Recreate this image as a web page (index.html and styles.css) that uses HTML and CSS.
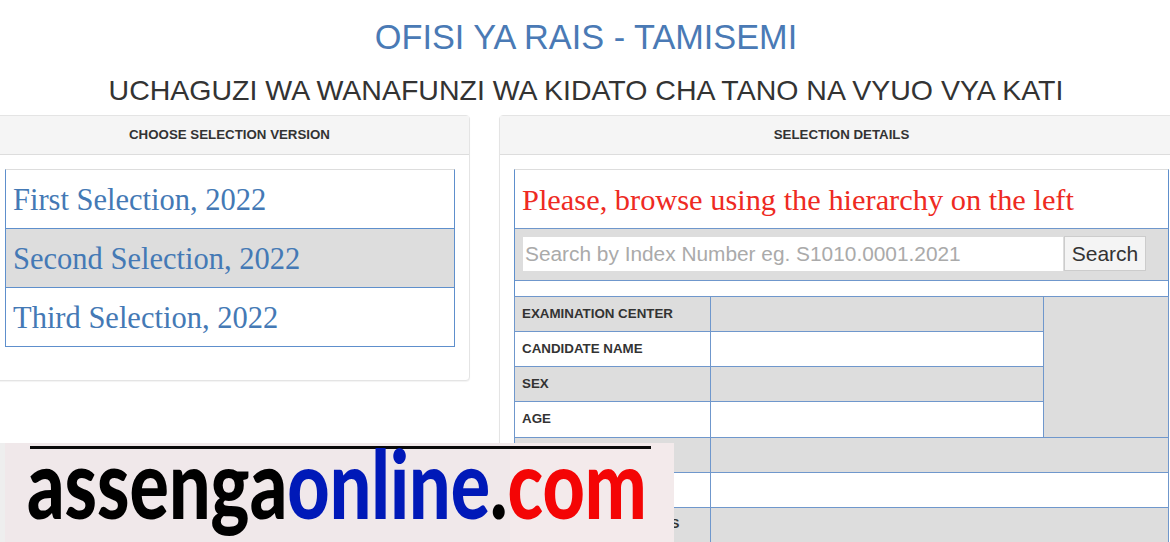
FILE: index.html
```html
<!DOCTYPE html>
<html lang="en">
<head>
<meta charset="utf-8">
<title>OFISI YA RAIS - TAMISEMI</title>
<link rel="stylesheet" href="styles.css">
</head>
<body>
<div class="page">
  <h1 class="title">OFISI YA RAIS - TAMISEMI</h1>
  <h2 class="subtitle">UCHAGUZI WA WANAFUNZI WA KIDATO CHA TANO NA VYUO VYA KATI</h2>
  <div class="columns">
    <section class="panel panel-left">
      <div class="panel-head">CHOOSE SELECTION VERSION</div>
      <div class="panel-body">
        <ul class="versions">
          <li class="version">First Selection, 2022</li>
          <li class="version alt">Second Selection, 2022</li>
          <li class="version">Third Selection, 2022</li>
        </ul>
      </div>
    </section>
    <section class="panel panel-right">
      <div class="panel-head">SELECTION DETAILS</div>
      <div class="panel-body">
        <div class="details">
          <div class="notice">Please, browse using the hierarchy on the left</div>
          <form class="search">
            <input class="search-input" type="text" placeholder="Search by Index Number eg. S1010.0001.2021">
            <button class="search-btn" type="button">Search</button>
          </form>
          <div class="spacer"></div>
          <table class="info">
            <tr class="alt"><th>EXAMINATION CENTER</th><td></td><td class="photo alt" rowspan="4"></td></tr>
            <tr><th>CANDIDATE NAME</th><td></td></tr>
            <tr class="alt"><th>SEX</th><td></td></tr>
            <tr><th>AGE</th><td></td></tr>
            <tr class="alt"><th>SELECTED SCHOOL</th><td colspan="2"></td></tr>
            <tr><th>DISTRICT</th><td colspan="2"></td></tr>
            <tr class="alt"><th>EXAMINATION RESULTS</th><td colspan="2"></td></tr>
          </table>
        </div>
      </div>
    </section>
  </div>
</div>
<div class="banner">
  <div class="banner-rule"></div>
  <div class="banner-text"><span class="ink">assenga</span><span class="blue">online</span><span class="ink">.</span><span class="red">com</span></div>
</div>
</body>
</html>
```
FILE: styles.css
```css
* { box-sizing: border-box; }
html, body { margin: 0; padding: 0; background: #fff; }
body { width: 1170px; height: 542px; overflow: hidden; position: relative; font-family: "Liberation Sans", Arial, sans-serif; color: #333; }
.page { width: 1170px; height: 542px; overflow: hidden; }
.title { margin: 0; height: 73px; padding: 17px 0 0 2px; font-size: 34.3px; line-height: 40px; font-weight: 400; color: #4a7ab5; text-align: center; }
.subtitle { margin: 0; height: 42px; padding-left: 2px; font-size: 28.5px; line-height: 34px; font-weight: 400; color: #333; text-align: center; white-space: nowrap; }
.columns { display: flex; gap: 29px; margin-left: -11px; align-items: flex-start; }
.panel { background: #fff; border: 1px solid #e4e4e4; border-radius: 4px; box-shadow: 0 1px 1px rgba(0,0,0,.05); flex: none; }
.panel-left { width: 481px; height: 266px; }
.panel-right { width: 685px; height: 500px; }
.panel-head { height: 39px; background: #f5f5f5; border-bottom: 1px solid #ddd; font-size: 13.3px; line-height: 38px; font-weight: 700; text-align: center; color: #333; }
.panel-body { padding: 14px 15px 0; }
.panel-right .panel-body { padding-left: 14px; }
.versions { list-style: none; margin: 0; padding: 0; border: 1px solid #5e8fcc; border-top: 1px solid #ddd; width: 450px; }
.version { height: 59px; padding: 0 7px; font-family: "Liberation Serif", "Times New Roman", serif; font-size: 30.5px; line-height: 60px; color: #4479b5; border-bottom: 1px solid #5e8fcc; white-space: nowrap; }
.version:last-child { border-bottom: 0; height: 58px; }
.version.alt { background: #ddd; }
.details { width: 655px; border-left: 1px solid #5e8fcc; border-right: 1px solid #5e8fcc; border-top: 1px solid #ddd; }
.notice { height: 59px; padding: 0 7px; font-family: "Liberation Serif", "Times New Roman", serif; font-size: 30.4px; line-height: 60px; color: #ee2a22; border-bottom: 1px solid #6f97cc; white-space: nowrap; }
.search { display: flex; height: 52px; margin: 0; padding: 7px 0 0 7px; background: #ddd; border-bottom: 1px solid #6f97cc; align-items: flex-start; }
.search-input { width: 542px; height: 36px; padding: 0 2px; border: 1px solid #ddd; background: #fff; font-family: "Liberation Sans", Arial, sans-serif; font-size: 20.85px; color: #333; outline: 0; }
.search-input::placeholder { color: #aaa; opacity: 1; }
.search-btn { width: 82px; height: 35px; padding: 0; border: 1px solid #ccc; background: #f4f4f4; font-family: "Liberation Sans", Arial, sans-serif; font-size: 21px; color: #333; }
.spacer { height: 15px; }
.info { width: 654px; margin-left: -1px; border-collapse: collapse; table-layout: fixed; }
.info th, .info td { height: 35.15px; padding: 0 7px 2px; border: 1px solid #6f97cc; font-size: 13.35px; font-weight: 700; text-align: left; color: #333; white-space: nowrap; }
.info th { width: 196px; }
.info td { width: 333px; }
.info td.photo { width: 125px; }
.alt th, .alt td, .photo.alt { background: #ddd; }
.banner { position: absolute; left: 0; top: 443px; width: 674px; height: 99px; background: linear-gradient(90deg, #eee 0, #eee 5px, #f0e8ea 5px, #f0e8ea 510px, #f3eaeb 510px); }
.banner-rule { position: absolute; left: 30px; top: 3px; width: 621px; height: 3px; background: #0a0a0a; }
.banner-text { position: absolute; left: 27px; top: 0; width: 620px; font-family: Lato, "Open Sans", sans-serif; font-size: 96px; line-height: 78px; font-weight: 900; white-space: nowrap; transform-origin: 0 0; transform: scaleX(.765); }
.ink { color: #000; }
.blue { color: #0019b8; }
.red { color: #f40505; }
```
